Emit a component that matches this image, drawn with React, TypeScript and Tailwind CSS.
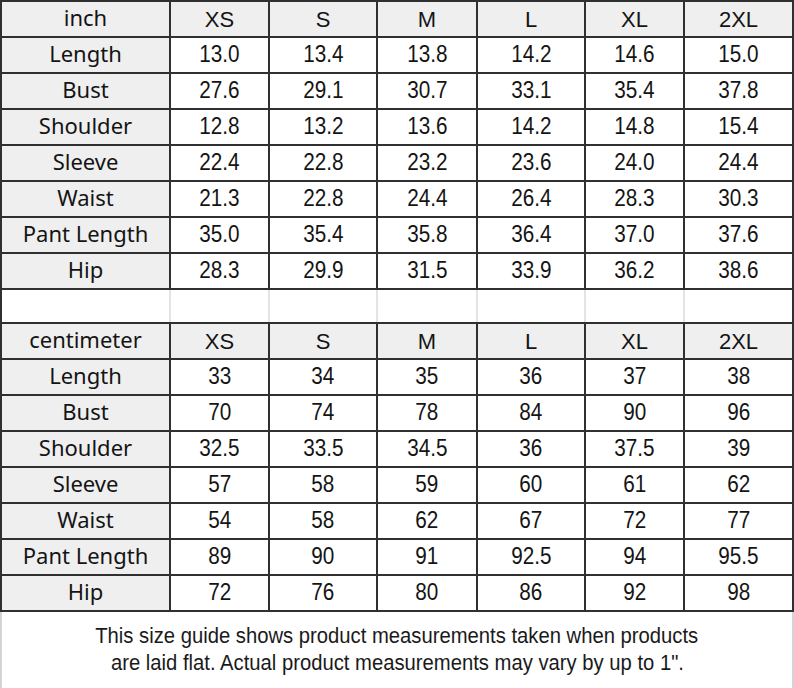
const sizes = ["XS", "S", "M", "L", "XL", "2XL"];

const inchRows: [string, string[]][] = [
	["Length", ["13.0", "13.4", "13.8", "14.2", "14.6", "15.0"]],
	["Bust", ["27.6", "29.1", "30.7", "33.1", "35.4", "37.8"]],
	["Shoulder", ["12.8", "13.2", "13.6", "14.2", "14.8", "15.4"]],
	["Sleeve", ["22.4", "22.8", "23.2", "23.6", "24.0", "24.4"]],
	["Waist", ["21.3", "22.8", "24.4", "26.4", "28.3", "30.3"]],
	["Pant Length", ["35.0", "35.4", "35.8", "36.4", "37.0", "37.6"]],
	["Hip", ["28.3", "29.9", "31.5", "33.9", "36.2", "38.6"]],
];

const cmRows: [string, string[]][] = [
	["Length", ["33", "34", "35", "36", "37", "38"]],
	["Bust", ["70", "74", "78", "84", "90", "96"]],
	["Shoulder", ["32.5", "33.5", "34.5", "36", "37.5", "39"]],
	["Sleeve", ["57", "58", "59", "60", "61", "62"]],
	["Waist", ["54", "58", "62", "67", "72", "77"]],
	["Pant Length", ["89", "90", "91", "92.5", "94", "95.5"]],
	["Hip", ["72", "76", "80", "86", "92", "98"]],
];

const gridCols = "grid grid-cols-[167px_97px_106px_98px_106px_97px_107px]";

function Num({ children }: { children: React.ReactNode }) {
	return <span className="inline-block scale-x-[0.9]">{children}</span>;
}

function SizeTable({ unit, rows }: { unit: string; rows: [string, string[]][] }) {
	return (
		<div className={`${gridCols} gap-[2px] border-2 border-[#303030] bg-[#303030]`}>
			{/* Header row */}
			<div className="flex h-[34px] items-center justify-center bg-[#efefef] pb-[3px] font-['Noto_Sans',sans-serif] text-[22px] text-[#141414]">
				{unit}
			</div>
			{sizes.map((s) => (
				<div
					key={s}
					className="flex h-[34px] items-center justify-center bg-[#efefef] font-['Liberation_Sans',Arial,sans-serif] text-[22px] text-[#141414]"
				>
					{s}
				</div>
			))}

			{/* Measurement rows */}
			{rows.map(([label, values]) => (
				<div key={label} className="contents">
					<div className="flex h-[34px] items-center justify-center bg-[#efefef] pb-[3px] font-['Noto_Sans',sans-serif] text-[22px] text-[#141414]">
						{label}
					</div>
					{values.map((v, i) => (
						<div
							key={i}
							className="flex h-[34px] items-center justify-center bg-white pb-[1px] font-['Liberation_Sans',Arial,sans-serif] text-[23px] text-[#141414]"
						>
							<Num>{v}</Num>
						</div>
					))}
				</div>
			))}
		</div>
	);
}

export default function App() {
	return (
		<div className="h-[688px] w-[794px] overflow-hidden bg-white">
			<SizeTable unit="inch" rows={inchRows} />

			{/* Spacer row between the two tables */}
			<div className={`${gridCols} h-[32px] gap-[2px] border-x-2 border-x-[#303030] bg-[#e4e4e4]`}>
				{Array.from({ length: 7 }).map((_, i) => (
					<div key={i} className="bg-white" />
				))}
			</div>

			<SizeTable unit="centimeter" rows={cmRows} />

			{/* Footer note */}
			<div className="flex h-[78px] flex-col items-center justify-center border-x-2 border-b-2 border-[#d4d4d4] pb-[2px] font-['Liberation_Sans',Arial,sans-serif] text-[22px] leading-[27px] text-[#1a1a1a]">
				<p className="scale-x-[0.92] whitespace-nowrap">This size guide shows product measurements taken when products</p>
				<p className="scale-x-[0.92] whitespace-nowrap">are laid flat. Actual product measurements may vary by up to 1".</p>
			</div>
		</div>
	);
}
